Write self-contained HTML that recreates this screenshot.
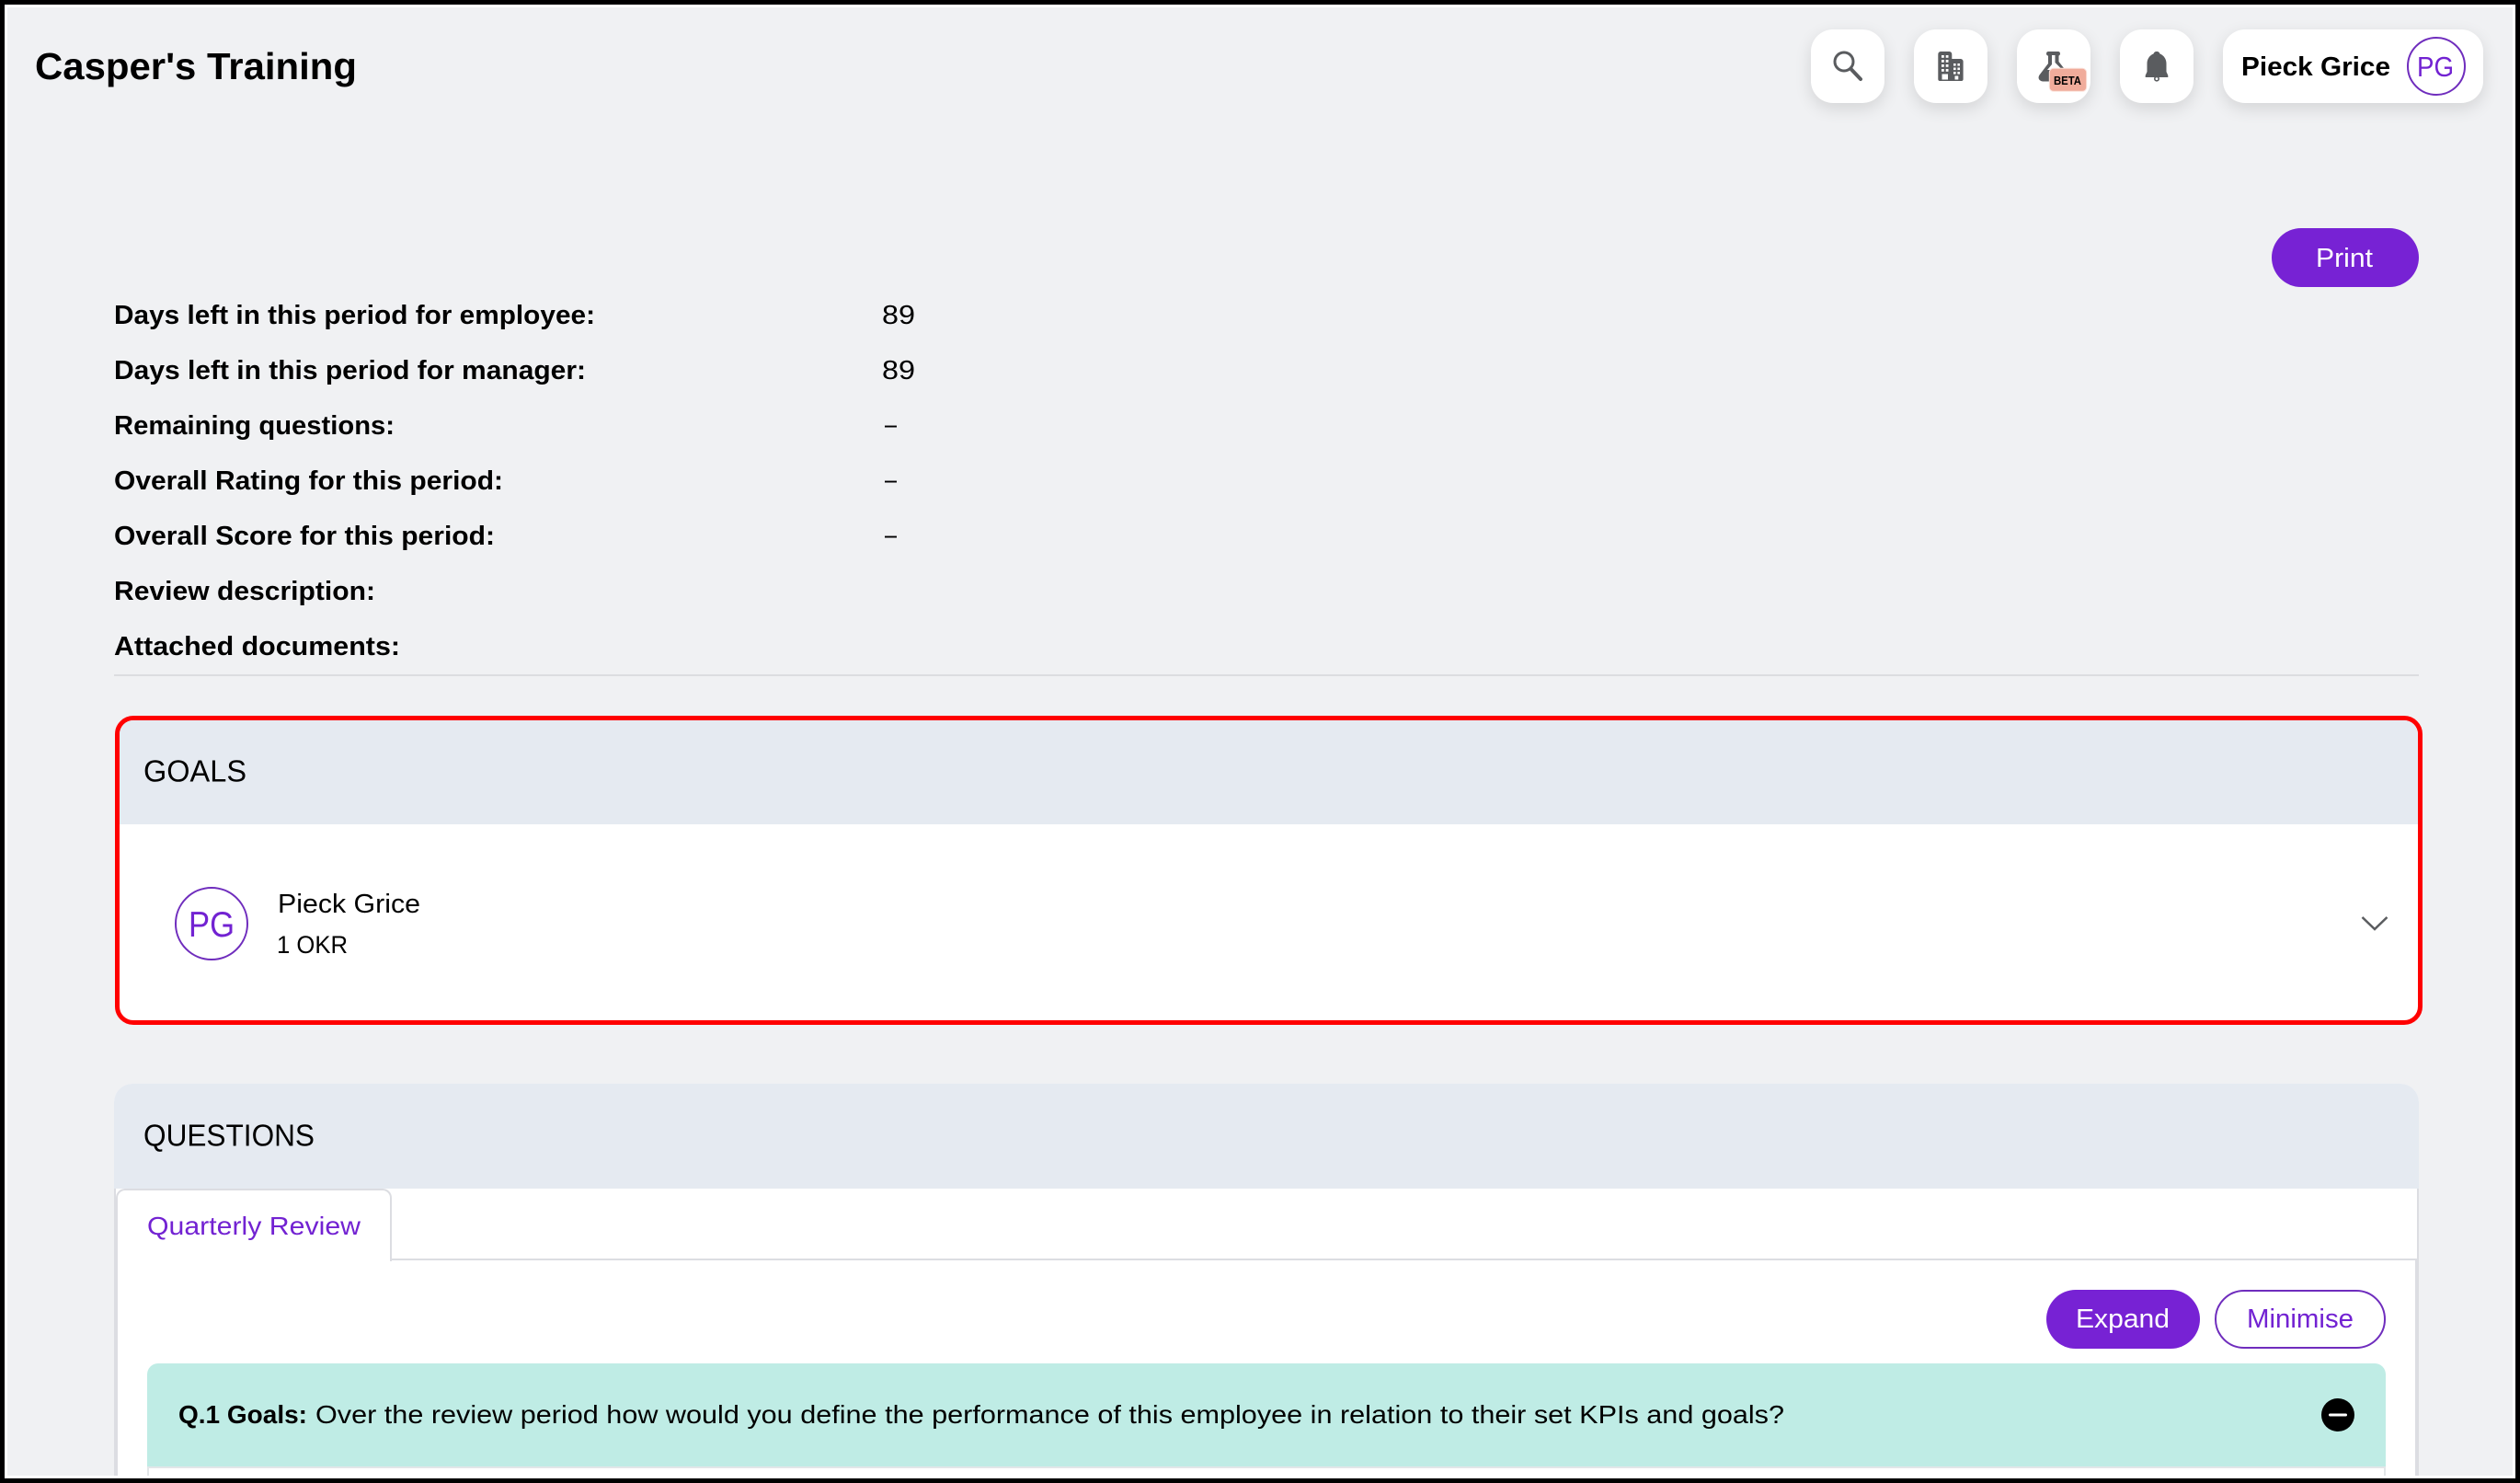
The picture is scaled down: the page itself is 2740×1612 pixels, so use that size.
<!DOCTYPE html>
<html lang="en"><head><meta charset="utf-8"><title>Casper's Training</title>
<style>
html,body{margin:0;padding:0;width:2740px;height:1612px;overflow:hidden;background:#000}
*{box-sizing:border-box}
#stage{position:relative;width:2740px;height:1612px;overflow:hidden;background:#000}
.a{position:absolute}
.ib{position:absolute;top:32px;height:80px;background:#fff;border-radius:24px;box-shadow:0 6px 18px rgba(0,0,0,.12)}
svg.ov{position:absolute;left:0;top:0}
text{font-family:"Liberation Sans",Arial,sans-serif;fill:#000;font-size:29px}
.b{font-weight:700}
.p{fill:#7222d2}
.w{fill:#fff}
</style></head><body>
<div id="stage">
<div class="a" style="left:5px;top:5px;width:2730px;height:1602px;background:#fff"></div>
<div class="a" style="left:8px;top:8px;width:2724px;height:1596px;background:#f0f1f3;overflow:hidden">
  <div class="a" style="left:116px;top:725px;width:2506px;height:2px;background:#dcdde0"></div>
</div>
<div class="ib" style="left:1969px;width:80px"></div>
<div class="ib" style="left:2081px;width:80px"></div>
<div class="ib" style="left:2193px;width:80px"></div>
<div class="ib" style="left:2305px;width:80px"></div>
<div class="ib" style="left:2417px;width:283px"></div>
<div class="a" style="left:2617px;top:40px;width:64px;height:64px;border:2px solid #6f2dbd;border-radius:50%"></div>
<div class="a" style="left:2470px;top:248px;width:160px;height:64px;background:#7722d4;border-radius:32px"></div>

<!-- Goals -->
<div class="a" style="left:125px;top:778px;width:2509px;height:336px;background:#fff;border:5px solid #f00;border-radius:20px;overflow:hidden">
  <div class="a" style="left:0;top:0;width:100%;height:113px;background:#e5eaf1"></div>
</div>
<div class="a" style="left:190px;top:964px;width:80px;height:80px;border:2px solid #6f2dbd;border-radius:50%"></div>

<!-- Questions -->
<div class="a" style="left:124px;top:1178px;width:2506px;height:426px;background:#fff;border-radius:20px 20px 0 0;overflow:hidden">
  <div class="a" style="left:0;top:0;width:100%;height:114px;background:#e5eaf1"></div>
  <div class="a" style="left:0;top:114px;width:2px;height:312px;background:#dcdde2"></div>
  <div class="a" style="left:2504px;top:114px;width:2px;height:312px;background:#dcdde2"></div>
  <div class="a" style="left:2px;top:190px;width:2px;height:236px;background:#dcdde2"></div>
  <div class="a" style="left:2502px;top:190px;width:2px;height:236px;background:#dcdde2"></div>
  <div class="a" style="left:300px;top:190px;width:2204px;height:2px;background:#dcdde2"></div>
</div>
<div class="a" style="left:126px;top:1292px;width:300px;height:79px;background:#fff;border:2px solid #dcdde2;border-bottom:0;border-radius:10px 10px 0 0"></div>
<div class="a" style="left:2225px;top:1402px;width:167px;height:64px;background:#7722d4;border-radius:32px"></div>
<div class="a" style="left:2408px;top:1402px;width:186px;height:64px;background:#fff;border:2px solid #6f2dbd;border-radius:32px"></div>
<div class="a" style="left:160px;top:1482px;width:2434px;height:112px;background:#bfece5;border-radius:12px 12px 0 0"></div>
<div class="a" style="left:160px;top:1594px;width:2434px;height:10px;background:#fff;border:2px solid #e2e6e8;border-bottom:0"></div>

<svg class="ov" width="2740" height="1612" viewBox="0 0 2740 1612" xmlns="http://www.w3.org/2000/svg">
  <text class="b" x="38" y="86" style="font-size:41px" textLength="350" lengthAdjust="spacingAndGlyphs">Casper's Training</text>

  <!-- search -->
  <g fill="none" stroke="#5a5c5f" stroke-linecap="round">
    <circle cx="2005" cy="67" r="10" stroke-width="3"/>
    <path d="M2013 75.5 L2023 86" stroke-width="4"/>
  </g>
  <!-- building -->
  <path fill="#5a5c5f" d="M2107.3 59.5a3 3 0 0 1 3-3.5h9a3 3 0 0 1 3 3.5V64h9.5a2.8 2.8 0 0 1 2.8 2.8V86a2 2 0 0 1-2 2h-23.3a2 2 0 0 1-2-2Z"/>
  <g fill="#fff">
    <rect x="2111" y="60" width="2.8" height="2.8"/><rect x="2115.7" y="60" width="2.8" height="2.8"/>
    <rect x="2111" y="65" width="2.8" height="2.8"/><rect x="2115.7" y="65" width="2.8" height="2.8"/>
    <rect x="2111" y="70" width="2.8" height="2.8"/><rect x="2115.7" y="70" width="2.8" height="2.8"/>
    <rect x="2111" y="75" width="2.8" height="2.8"/><rect x="2115.7" y="75" width="2.8" height="2.8"/>
    <rect x="2111.5" y="80.5" width="6.5" height="6"/>
    <rect x="2124" y="69" width="2.6" height="2.6"/><rect x="2128.4" y="69" width="2.6" height="2.6"/>
    <rect x="2124" y="73.5" width="2.6" height="2.6"/><rect x="2128.4" y="73.5" width="2.6" height="2.6"/>
    <rect x="2124" y="78" width="2.6" height="2.6"/><rect x="2128.4" y="78" width="2.6" height="2.6"/>
    <rect x="2125.5" y="82.5" width="3.8" height="4"/>
  </g>
  <!-- flask -->
  <rect x="2225" y="56" width="15" height="4.6" rx="2.2" fill="#5a5c5f"/>
  <path fill="#5a5c5f" d="M2227 60 V69 L2217.5 81.5 C2215 85.5 2218 88.5 2222 88.5 H2244 V74 L2238.5 67 V60 Z"/>
  <path fill="#fff" d="M2231 60 V70 L2226 76 H2242.5 L2234.5 68 V60 Z"/>
  <rect x="2228.3" y="74.3" width="40.4" height="25" rx="4.5" fill="#f0ac9b" stroke="#fbe3dc" stroke-width="1"/>
  <text class="b" x="2233" y="92" style="font-size:12.5px" textLength="30" lengthAdjust="spacingAndGlyphs">BETA</text>
  <!-- bell -->
  <path fill="#5a5c5f" d="M2345 56 C2347 56 2348 57 2348.5 58.5 C2352.5 60 2355.5 64 2355.5 69 V78 L2357.3 82 V84 H2332.7 V82 L2334.5 78 V69 C2334.5 64 2337.5 60 2341.5 58.5 C2342 57 2343 56 2345 56 Z"/>
  <circle cx="2345" cy="85.6" r="2.2" fill="#fff" stroke="#5a5c5f" stroke-width="1.6"/>

  <text class="b" x="2437" y="82" textLength="162" lengthAdjust="spacingAndGlyphs">Pieck Grice</text>
  <text class="p" x="2628" y="83" style="font-size:31px" textLength="40" lengthAdjust="spacingAndGlyphs">PG</text>
  <text class="w" x="2518" y="290" textLength="62" lengthAdjust="spacingAndGlyphs">Print</text>

  <text class="b" x="124" y="352" textLength="523" lengthAdjust="spacingAndGlyphs">Days left in this period for employee:</text>
  <text class="b" x="124" y="412" textLength="513" lengthAdjust="spacingAndGlyphs">Days left in this period for manager:</text>
  <text class="b" x="124" y="472" textLength="305" lengthAdjust="spacingAndGlyphs">Remaining questions:</text>
  <text class="b" x="124" y="532" textLength="423" lengthAdjust="spacingAndGlyphs">Overall Rating for this period:</text>
  <text class="b" x="124" y="592" textLength="414" lengthAdjust="spacingAndGlyphs">Overall Score for this period:</text>
  <text class="b" x="124" y="652" textLength="284" lengthAdjust="spacingAndGlyphs">Review description:</text>
  <text class="b" x="124" y="712" textLength="311" lengthAdjust="spacingAndGlyphs">Attached documents:</text>
  <text x="959" y="352" textLength="36" lengthAdjust="spacingAndGlyphs">89</text>
  <text x="959" y="412" textLength="36" lengthAdjust="spacingAndGlyphs">89</text>
  <text x="962" y="471" textLength="13" lengthAdjust="spacingAndGlyphs">–</text>
  <text x="962" y="531" textLength="13" lengthAdjust="spacingAndGlyphs">–</text>
  <text x="962" y="591" textLength="13" lengthAdjust="spacingAndGlyphs">–</text>

  <text x="156" y="849.5" style="font-size:33px" textLength="112" lengthAdjust="spacingAndGlyphs">GOALS</text>
  <text class="p" x="205" y="1018" style="font-size:39px" textLength="50" lengthAdjust="spacingAndGlyphs">PG</text>
  <text x="302" y="992" textLength="155" lengthAdjust="spacingAndGlyphs">Pieck Grice</text>
  <text x="301" y="1036" style="font-size:27px" textLength="77" lengthAdjust="spacingAndGlyphs">1 OKR</text>
  <path d="M2568.5 997 L2582 1010 L2595.5 997" fill="none" stroke="#5a5c5f" stroke-width="2.5"/>

  <text x="156" y="1245.5" style="font-size:33px" textLength="186" lengthAdjust="spacingAndGlyphs">QUESTIONS</text>
  <text class="p" x="160" y="1342" style="font-size:28px" textLength="232" lengthAdjust="spacingAndGlyphs">Quarterly Review</text>
  <text class="w" x="2257" y="1443" textLength="102" lengthAdjust="spacingAndGlyphs">Expand</text>
  <text class="p" x="2443" y="1443" textLength="116" lengthAdjust="spacingAndGlyphs">Minimise</text>
  <text class="b" x="194" y="1547" style="font-size:28px" textLength="140" lengthAdjust="spacingAndGlyphs">Q.1 Goals:</text>
  <text x="343" y="1547" style="font-size:28px" textLength="1597" lengthAdjust="spacingAndGlyphs">Over the review period how would you define the performance of this employee in relation to their set KPIs and goals?</text>
  <circle cx="2542" cy="1538" r="18" fill="#000"/>
  <rect x="2532" y="1536.5" width="20" height="3" rx="1.5" fill="#fff"/>
</svg>
</div>
</body></html>
